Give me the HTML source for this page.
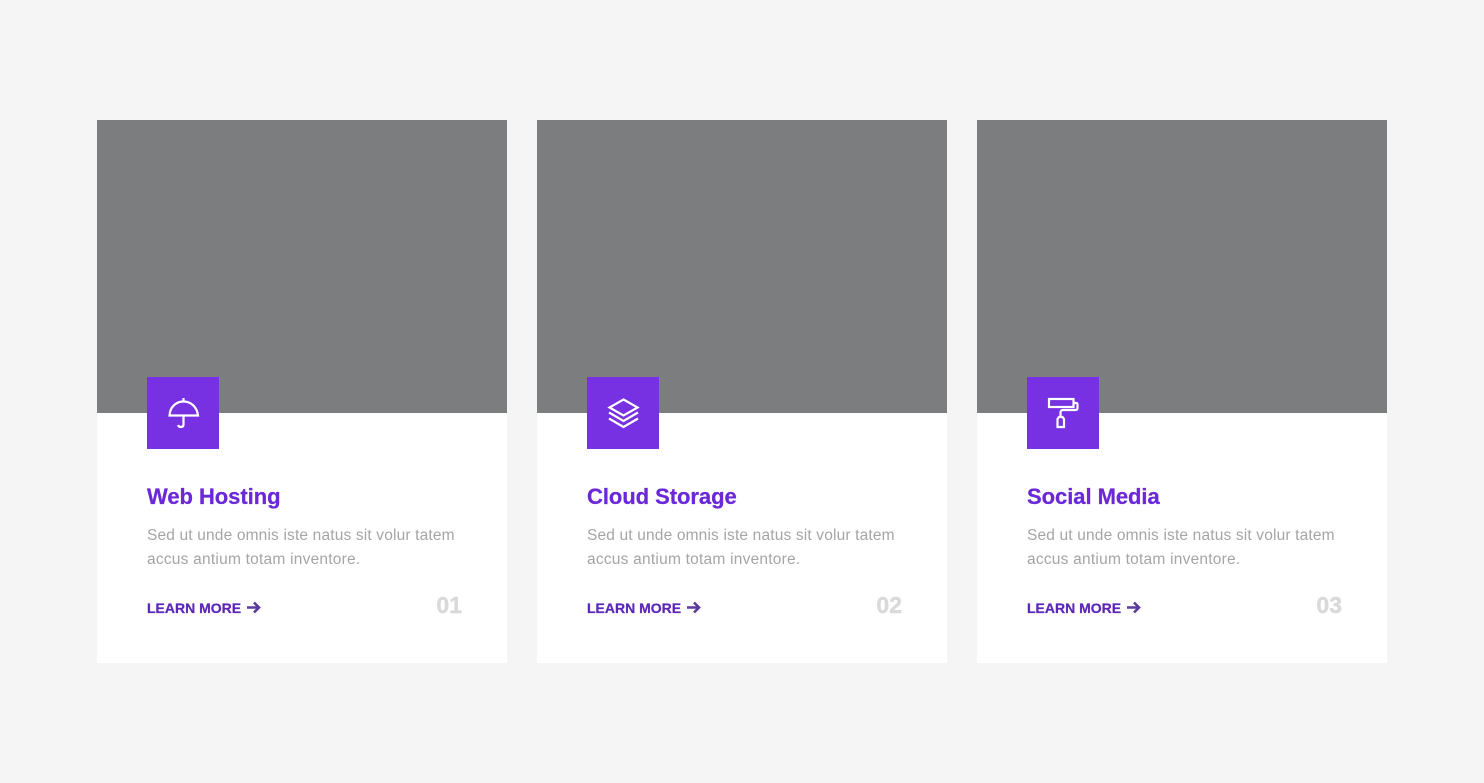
<!DOCTYPE html>
<html lang="en">
<head>
<meta charset="utf-8">
<title>Services</title>
<style>
html,body{margin:0;padding:0;width:1484px;height:783px;overflow:hidden;background:#f5f5f5;font-family:"Liberation Sans",sans-serif}
.card{position:absolute;top:120px;width:410px;height:543px;background:#fff}
.img{position:absolute;left:0;top:0;width:410px;height:293px;background:#7c7d7f}
.ico{position:absolute;left:50px;top:257px;width:72px;height:72px;background:#7730e2}
.ico svg{position:absolute;left:0;top:0}
h3{position:absolute;left:50px;top:363px;margin:0;font-size:22px;line-height:28px;font-weight:700;color:#6a28d9;white-space:nowrap;letter-spacing:-.05px;-webkit-text-stroke:.25px #6a28d9}
p{position:absolute;left:50px;top:404px;margin:0;font-size:15.5px;line-height:24px;color:#a5a5a5;white-space:nowrap;letter-spacing:.16px}
p span{letter-spacing:.23px}
.lm{position:absolute;left:50px;top:479px;font-size:14px;line-height:18px;font-weight:700;color:#5a27b8;white-space:nowrap;letter-spacing:0;-webkit-text-stroke:.25px #5a27b8}
.ar{position:absolute;left:149px;top:480px}
.n{position:absolute;right:45px;top:471px;font-size:23px;line-height:28px;font-weight:700;color:#d9d9d9;letter-spacing:0;-webkit-text-stroke:.4px #d9d9d9}
</style>
</head>
<body>
<div class="card" style="left:97px">
  <div class="img"></div>
  <div class="ico"><svg width="72" height="72" viewBox="0 0 72 72" fill="none" stroke="#fff" stroke-width="2.200"><path d="M36.500 21V24.500M22.500 38.500C23 30 29 24.500 36.500 24.500S50 30 51 38.500ZM36.500 38.500V47.500C36.500 49.500 35.500 50 34 50S31.500 49.500 31 48"/></svg></div>
  <h3>Web Hosting</h3>
  <p>Sed ut unde omnis iste natus sit volur tatem<br><span>accus antium totam inventore.</span></p>
  <div class="lm">LEARN MORE</div>
  <svg class="ar" width="16" height="16" viewBox="0 0 16 16" fill="none" stroke="#5a3a9e" stroke-width="2.600"><path d="M1 7.500H13M8 2.500L13 7.500L8 12.500"/></svg>
  <div class="n">01</div>
</div>
<div class="card" style="left:537px">
  <div class="img"></div>
  <div class="ico"><svg width="72" height="72" viewBox="0 0 72 72" fill="none" stroke="#fff" stroke-width="2.200"><path d="M36.500 22.500L50.500 30.500L36.500 38.500L22.500 30.500Z"/><path d="M22 35.500L36.500 44L51 35.500"/><path d="M22 41.500L36.500 50L51 41.500"/></svg></div>
  <h3>Cloud Storage</h3>
  <p>Sed ut unde omnis iste natus sit volur tatem<br><span>accus antium totam inventore.</span></p>
  <div class="lm">LEARN MORE</div>
  <svg class="ar" width="16" height="16" viewBox="0 0 16 16" fill="none" stroke="#5a3a9e" stroke-width="2.600"><path d="M1 7.500H13M8 2.500L13 7.500L8 12.500"/></svg>
  <div class="n">02</div>
</div>
<div class="card" style="left:977px">
  <div class="img"></div>
  <div class="ico"><svg width="72" height="72" viewBox="0 0 72 72" fill="none" stroke="#fff" stroke-width="2.200"><rect x="22" y="22" width="24.500" height="8"/><path d="M46.500 26H49C50 26 50.500 26.500 50.500 27.500V31C50.500 32.500 49.500 33 48.500 33H36C34.500 33 33.500 34 33.500 35.500V39.500"/><path d="M32 40H35.500L37 42V50H30.500V42Z"/></svg></div>
  <h3>Social Media</h3>
  <p>Sed ut unde omnis iste natus sit volur tatem<br><span>accus antium totam inventore.</span></p>
  <div class="lm">LEARN MORE</div>
  <svg class="ar" width="16" height="16" viewBox="0 0 16 16" fill="none" stroke="#5a3a9e" stroke-width="2.600"><path d="M1 7.500H13M8 2.500L13 7.500L8 12.500"/></svg>
  <div class="n">03</div>
</div>
</body>
</html>
